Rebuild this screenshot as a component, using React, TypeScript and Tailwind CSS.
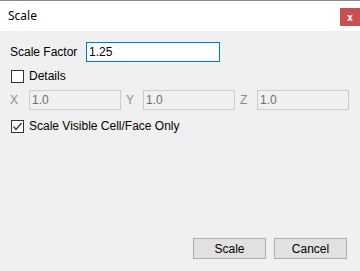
import React from "react";

const ui = { fontFamily: '"Liberation Sans", "Noto Sans", Arial, sans-serif' };

function CheckBox({ checked, label }: { checked?: boolean; label: string }) {
  return (
    <label className="flex items-center text-[12px] text-black">
      <span className="flex h-[13px] w-[13px] items-center justify-center border border-[#333333] bg-white">
        {checked && (
          <svg width="11" height="11" viewBox="0 0 11 11">
            <path d="M1.5 5.5 L4 8.5 L9.5 2" fill="none" stroke="#333333" strokeWidth="1.3" />
          </svg>
        )}
      </span>
      <span className="ml-[5px]">{label}</span>
    </label>
  );
}

function AxisField({ axis, value, first }: { axis: string; value: string; first?: boolean }) {
  return (
    <div className="flex items-center">
      <span className={first ? "w-[19px] text-[12px] text-[#8d8d8d]" : "w-[19px] pl-[2px] text-[12px] text-[#8d8d8d]"}>
        {axis}
      </span>
      <div className="flex h-[20px] w-[92px] items-center border border-[#cccccc] bg-[#f0f0f0] px-[2px] text-[12px] text-[#6d6d6d]">
        {value}
      </div>
    </div>
  );
}

export default function App() {
  return (
    <div className="flex h-[271px] w-[360px] flex-col overflow-hidden bg-[#f0f0f0]" style={ui}>
      <div className="flex h-[31px] items-center justify-between border-t border-[#8a8a8a] bg-white pl-[8px]">
        <span className="text-[12px] text-black" style={{ fontFamily: '"Noto Sans", "Open Sans", sans-serif' }}>
          Scale
        </span>
        <button className="mt-[2px] flex h-[18px] w-[20px] items-center justify-center bg-[#c75050] text-[10px] font-bold text-white">
          x
        </button>
      </div>

      <div className="flex flex-col pl-[10px] pt-[11px]">
        <div className="flex items-center">
          <span className="w-[76px] text-[12px] text-black">Scale Factor</span>
          <input
            defaultValue="1.25"
            className="h-[20px] w-[134px] border border-[#0078d7] bg-white px-[2px] text-[12px] text-black outline-none"
          />
        </div>
        <div className="mt-[5px] pl-[1px]">
          <CheckBox label="Details" />
        </div>
        <div className="mt-[5px] flex gap-[3px]">
          <AxisField axis="X" value="1.0" first />
          <AxisField axis="Y" value="1.0" />
          <AxisField axis="Z" value="1.0" />
        </div>
        <div className="mt-[7px] pl-[1px]">
          <CheckBox checked label="Scale Visible Cell/Face Only" />
        </div>
      </div>

      <div className="mt-auto flex justify-end gap-[8px] pb-[12px] pr-[13px]">
        <button className="h-[21px] w-[73px] border border-[#adadad] bg-[#e1e1e1] text-[12px] text-black">Scale</button>
        <button className="h-[21px] w-[73px] border border-[#adadad] bg-[#e1e1e1] text-[12px] text-black">Cancel</button>
      </div>
    </div>
  );
}
